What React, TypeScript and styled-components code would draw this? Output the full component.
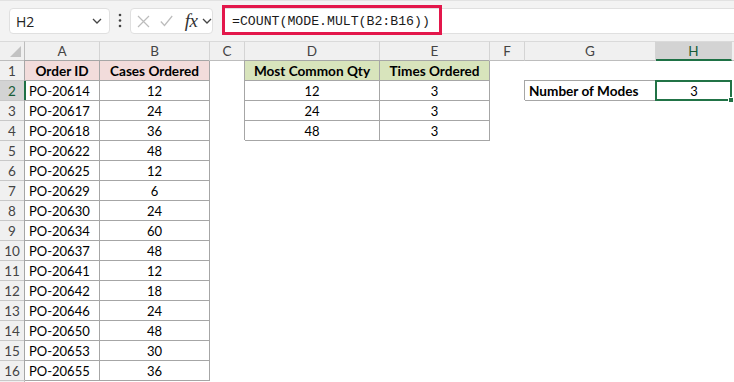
import React from "react";
import styled, { createGlobalStyle, css } from "styled-components";

// 시트 데이터
const orders: [string, number][] = [
  ["PO-20614", 12],
  ["PO-20617", 24],
  ["PO-20618", 36],
  ["PO-20622", 48],
  ["PO-20625", 12],
  ["PO-20629", 6],
  ["PO-20630", 24],
  ["PO-20634", 60],
  ["PO-20637", 48],
  ["PO-20641", 12],
  ["PO-20642", 18],
  ["PO-20646", 24],
  ["PO-20650", 48],
  ["PO-20653", 30],
  ["PO-20655", 36],
];

const modes: [number, number][] = [
  [12, 3],
  [24, 3],
  [48, 3],
];

// I 열은 2px만 보이므로 글자 없음
const columns = ["A", "B", "C", "D", "E", "F", "G", "H", ""];

const GlobalStyle = createGlobalStyle`
  html, body {
    margin: 0;
    padding: 0;
    background: #fff;
    overflow: hidden;
  }
  body {
    font-family: "Lato", "Liberation Sans", sans-serif;
  }
`;

const Screen = styled.div`
  width: 734px;
  height: 382px;
  overflow: hidden;
  display: flex;
  flex-direction: column;
  background: #fff;
`;

const FormulaBar = styled.div`
  flex: none;
  height: 41px;
  box-sizing: border-box;
  background: #f3f3f3;
  border-top: 1px solid #e2e2e2;
  padding: 7px 0 0 9px;
  display: flex;
  align-items: flex-start;
`;

const Box = styled.div`
  height: 26px;
  box-sizing: border-box;
  background: #fff;
  border: 1px solid #e0e0e0;
  border-radius: 4px;
  display: flex;
  align-items: center;
`;

const NameBox = styled(Box)`
  width: 101px;
  padding: 0 7px 0 6px;
  justify-content: space-between;
  font-family: "Open Sans", "Noto Sans", sans-serif;
  font-size: 14px;
  color: #222;
`;

const Dots = styled.div`
  width: 20px;
  height: 26px;
  display: flex;
  align-items: center;
  justify-content: center;
`;

const FxBox = styled(Box)`
  width: 83px;
  padding: 0 0 0 6px;
`;

const IconSlot = styled.span<{ $w: number; $gap: number }>`
  width: ${(p) => p.$w}px;
  margin-right: ${(p) => p.$gap}px;
  display: flex;
  align-items: center;
  justify-content: center;
`;

const FxText = styled.span`
  font-family: "Liberation Serif", serif;
  font-style: italic;
  font-size: 19px;
  color: #333;
  letter-spacing: -0.5px;
  line-height: 1;
  margin-top: -2px;
`;

const FormulaInput = styled(Box)`
  position: relative;
  flex: 1;
  margin-left: 9px;
  border-right: none;
  border-radius: 4px 0 0 4px;
  padding-left: 9px;
  font-family: "Liberation Mono", monospace;
  font-size: 13.2px;
  color: #1a1a1a;
`;

const Highlight = styled.div`
  position: absolute;
  top: -4px;
  left: -1px;
  width: 220px;
  height: 30px;
  box-sizing: border-box;
  border: 3px solid #e3174b;
  pointer-events: none;
`;

const Sheet = styled.div`
  flex: none;
  display: grid;
  grid-template-columns: 25px 75px 110px 35px 135px 110px 35px 131px 76px 1fr;
  grid-auto-rows: 20px;
  font-size: 13px;
`;

const HeaderCell = styled.div<{ $selected?: boolean }>`
  position: relative;
  box-sizing: border-box;
  display: flex;
  align-items: center;
  justify-content: center;
  font-size: 13.5px;
  background: ${(p) => (p.$selected ? "#d3d3d3" : "#f0f0f0")};
  color: ${(p) => (p.$selected ? "#185c37" : "#444")};
  border-top: 1px solid #dadada;
  border-right: 1px solid #d4d4d4;
  border-bottom: ${(p) => (p.$selected ? "2px solid #1e7145" : "1px solid #bdbdbd")};
`;

const Corner = styled(HeaderCell)`
  justify-content: flex-end;
  align-items: flex-end;
  padding: 0 3px 3px 0;
  border-right-color: #bdbdbd;
`;

const RowHead = styled.div<{ $selected?: boolean }>`
  position: relative;
  box-sizing: border-box;
  display: flex;
  align-items: center;
  justify-content: center;
  font-size: 13.5px;
  background: ${(p) => (p.$selected ? "#d3d3d3" : "#f0f0f0")};
  color: ${(p) => (p.$selected ? "#185c37" : "#444")};
  border-right: 1px solid #bdbdbd;
  border-bottom: 1px solid #c8c8c8;

  ${(p) =>
    p.$selected &&
    css`
      &::after {
        content: "";
        position: absolute;
        top: 0;
        right: -2px;
        width: 2px;
        height: 100%;
        background: #1e7145;
        z-index: 1;
      }
    `}
`;

const Cell = styled.div<{ $fill?: string; $boxed?: boolean; $left?: boolean; $bold?: boolean }>`
  position: relative;
  box-sizing: border-box;
  display: flex;
  align-items: center;
  justify-content: ${(p) => (p.$left ? "flex-start" : "center")};
  padding: 0 4px;
  white-space: nowrap;
  color: #000;
  background: ${(p) => p.$fill ?? "#fff"};
  font-weight: ${(p) => (p.$bold ? 700 : 400)};
  font-size: ${(p) => (p.$bold ? "13.6px" : "13px")};

  ${(p) =>
    p.$boxed &&
    css`
      border-right: 1px solid #a6a6a6;
      border-bottom: 1px solid #a6a6a6;
      box-shadow: -1px -1px 0 #a6a6a6;
    `}
`;

const Selection = styled.div`
  position: absolute;
  top: -1px;
  left: -1px;
  right: 0;
  bottom: 0;
  border: 2px solid #217346;
  z-index: 2;
  pointer-events: none;
`;

const FillHandle = styled.span`
  position: absolute;
  right: -4px;
  bottom: -4px;
  width: 6px;
  height: 6px;
  box-sizing: border-box;
  background: #217346;
  border: 1px solid #fff;
`;

const PINK = "#f2dcdb";
const GREEN = "#d8e4bc";

const Chevron = () => (
  <svg width="10" height="6" viewBox="0 0 10 6">
    <polyline points="1,1 5,5 9,1" fill="none" stroke="#444" strokeWidth="1.3" />
  </svg>
);

const renderRow = (row: number) => {
  const order = orders[row - 2];
  const mode = row >= 2 && row <= 4 ? modes[row - 2] : undefined;
  const cells: React.ReactNode[] = [];

  if (row === 1) {
    cells.push(
      <Cell key="a" $boxed $bold $fill={PINK}>Order ID</Cell>,
      <Cell key="b" $boxed $bold $fill={PINK}>Cases Ordered</Cell>,
      <Cell key="c" />,
      <Cell key="d" $boxed $bold $fill={GREEN}>Most Common Qty</Cell>,
      <Cell key="e" $boxed $bold $fill={GREEN}>Times Ordered</Cell>,
      <Cell key="f" />,
      <Cell key="g" />,
      <Cell key="h" />,
      <Cell key="i" />
    );
  } else {
    cells.push(
      order ? (
        <Cell key="a" $boxed $left>{order[0]}</Cell>
      ) : (
        <Cell key="a" />
      ),
      order ? (
        <Cell key="b" $boxed>{order[1]}</Cell>
      ) : (
        <Cell key="b" />
      ),
      <Cell key="c" />,
      mode ? <Cell key="d" $boxed>{mode[0]}</Cell> : <Cell key="d" />,
      mode ? <Cell key="e" $boxed>{mode[1]}</Cell> : <Cell key="e" />,
      <Cell key="f" />,
      row === 2 ? (
        <Cell key="g" $boxed $left $bold>Number of Modes</Cell>
      ) : (
        <Cell key="g" />
      ),
      row === 2 ? (
        <Cell key="h">
          3
          <Selection>
            <FillHandle />
          </Selection>
        </Cell>
      ) : (
        <Cell key="h" />
      ),
      <Cell key="i" />
    );
  }

  return (
    <React.Fragment key={row}>
      {/* 17행은 아래쪽에 1px만 보이므로 번호 생략 */}
      <RowHead $selected={row === 2}>{row < 17 ? row : ""}</RowHead>
      {cells}
    </React.Fragment>
  );
};

const App = () => {
  const rows = Array.from({ length: 17 }, (_, i) => i + 1);
  return (
    <>
      <GlobalStyle />
      <Screen>
        <FormulaBar>
          <NameBox>
            <span>H2</span>
            <Chevron />
          </NameBox>
          <Dots>
            <svg width="4" height="16" viewBox="0 0 4 16">
              <circle cx="2" cy="2" r="1.3" fill="#444" />
              <circle cx="2" cy="7.5" r="1.3" fill="#444" />
              <circle cx="2" cy="13" r="1.3" fill="#444" />
            </svg>
          </Dots>
          <FxBox>
            <IconSlot $w={13} $gap={10}>
              <svg width="13" height="13" viewBox="0 0 13 13">
                <path d="M1 1 L12 12 M12 1 L1 12" stroke="#bcbcbc" strokeWidth="1.2" fill="none" />
              </svg>
            </IconSlot>
            <IconSlot $w={13} $gap={10}>
              <svg width="13" height="12" viewBox="0 0 13 12">
                <polyline points="0.8,6.5 4.5,10.5 12.2,1" stroke="#bcbcbc" strokeWidth="1.2" fill="none" />
              </svg>
            </IconSlot>
            <IconSlot $w={17} $gap={3}>
              <FxText>fx</FxText>
            </IconSlot>
            <IconSlot $w={10} $gap={0}>
              <Chevron />
            </IconSlot>
          </FxBox>
          <FormulaInput>
            =COUNT(MODE.MULT(B2:B16))
            <Highlight />
          </FormulaInput>
        </FormulaBar>
        <Sheet>
          <Corner>
            <svg width="11" height="11" viewBox="0 0 11 11">
              <polygon points="11,0 11,11 0,11" fill="#c2c2c2" />
            </svg>
          </Corner>
          {columns.map((c, i) => (
            <HeaderCell key={i} $selected={c === "H"}>
              {c}
            </HeaderCell>
          ))}
          {rows.map(renderRow)}
        </Sheet>
      </Screen>
    </>
  );
};

export default App;
